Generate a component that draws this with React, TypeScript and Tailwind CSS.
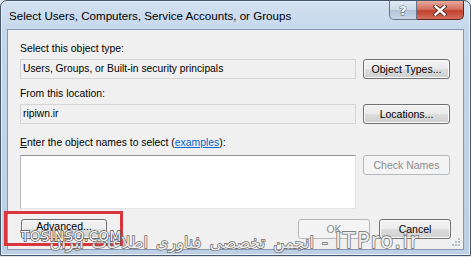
import React from 'react';

const ui = "[font-family:'Liberation_Sans',Arial,sans-serif]";

const btn =
  'h-[20px] rounded-[3px] border border-[#707070] bg-[linear-gradient(#f2f2f2_0%,#ebebeb_50%,#dddddd_51%,#cfcfcf_100%)] shadow-[inset_0_0_0_1px_#fbfbfb] text-[10.5px] leading-none text-black';

const btnOff =
  'h-[20px] rounded-[3px] border border-[#b5b9bc] bg-[#f4f4f4] text-[10.5px] leading-none text-[#8d8d8d]';

const Label: React.FC<{ children: React.ReactNode }> = ({ children }) => (
  <div className="h-[12px] text-[10.4px] leading-[12px] text-black">{children}</div>
);

const ReadBox: React.FC<{ value: string }> = ({ value }) => (
  <div className="flex h-[20px] items-center border border-[#d5d5d5] bg-[#f0f0f0] pl-[2px] text-[10.3px] text-black">
    {value}
  </div>
);

export default function App() {
  return (
    <div className={`h-[257px] w-[471px] overflow-hidden bg-[#dfe5ea] ${ui}`}>
      <div className="relative flex h-[256px] w-[471px] flex-col rounded-t-[7px] border border-[#47576b] bg-[linear-gradient(180deg,#d2e1f1_0%,#c4d6ea_14%,#bccfe5_100%)] px-[6px] pb-[5px] shadow-[inset_0_0_0_1px_#e7eff8]">
        {/* Title bar */}
        <div className="flex h-[28px] items-start">
          <span className="ml-[2px] mt-[8px] text-[11.6px] leading-[14px] text-black">
            Select Users, Computers, Service Accounts, or Groups
          </span>
          <div className="ml-auto flex">
            <div className="flex h-[19px] w-[28px] items-center justify-center rounded-bl-[5px] border border-t-0 border-[#65768b] bg-[linear-gradient(#e1eaf4_0%,#cdd9e7_50%,#b2c3d8_52%,#c9d7e7_100%)]">
              <span className="[font-family:'DejaVu_Sans',sans-serif] text-[13px] font-bold leading-none text-white [-webkit-text-stroke:1px_#4a5563] [paint-order:stroke_fill]">
                ?
              </span>
            </div>
            <div className="flex h-[19px] w-[47px] items-center justify-center rounded-br-[5px] border border-l-0 border-t-0 border-[#5b2a24] bg-[linear-gradient(#e9a99b_0%,#d4705f_45%,#c2402e_55%,#d3705a_100%)]">
              <svg width="14" height="11" viewBox="0 0 14 11">
                <path d="M2.5 1.5 L11.5 9.5 M11.5 1.5 L2.5 9.5" stroke="#4b2620" strokeWidth="4.2" strokeLinecap="square" />
                <path d="M2.5 1.5 L11.5 9.5 M11.5 1.5 L2.5 9.5" stroke="#ffffff" strokeWidth="2.4" strokeLinecap="square" />
              </svg>
            </div>
          </div>
        </div>

        {/* Client area */}
        <div className="relative flex flex-1 flex-col border border-[#8598b0] bg-[#f0f0f0] pl-[12px] pr-[12px] pt-[13px]">
          <div className="flex items-end gap-[7px]">
            <div className="w-[336px]">
              <Label>Select this object type:</Label>
              <div className="mt-[4px]">
                <ReadBox value="Users, Groups, or Built-in security principals" />
              </div>
            </div>
            <button className={`${btn} w-[87px]`}>Object Types...</button>
          </div>

          <div className="mt-[9px] flex items-end gap-[7px]">
            <div className="w-[336px]">
              <Label>From this location:</Label>
              <div className="mt-[4px]">
                <ReadBox value="ripiwn.ir" />
              </div>
            </div>
            <button className={`${btn} w-[87px]`}>Locations...</button>
          </div>

          <div className="mt-[13px] flex items-start gap-[7px]">
            <div className="w-[336px]">
              <Label>
                <span className="underline underline-offset-[1px]">E</span>nter the object names to select (
                <span className="text-[#0066cc] underline underline-offset-[1px]">examples</span>):
              </Label>
              <div className="mt-[6px] h-[54px] border border-[#e2e6ea] border-l-[#b8bcc2] border-t-[#8e9298] bg-white" />
            </div>
            <button className={`${btnOff} mt-[18px] w-[87px]`}>Check Names</button>
          </div>

          <div className="mt-[10px] flex items-start">
            <button className={`${btn} ml-[1px] w-[86px] pb-[6px]`}>Advanced...</button>
            <button className={`${btnOff} ml-auto w-[72px]`}>OK</button>
            <button className={`${btn} ml-[9px] w-[72px] border-[#3c3c3c]`}>Cancel</button>
          </div>

          {/* Resize grip */}
          <svg className="absolute bottom-[2px] right-[2px]" width="10" height="10" viewBox="0 0 10 10">
            {[
              [7, 1],
              [7, 4],
              [4, 4],
              [7, 7],
              [4, 7],
              [1, 7],
            ].map(([x, y], i) => (
              <rect key={i} x={x} y={y} width="2" height="2" fill="#b6bcc4" />
            ))}
          </svg>
        </div>

        {/* Red highlight annotation */}
        <div className="absolute left-[3px] top-[210px] h-[35px] w-[119px] border-[3px] border-[#d8353c]" />

        {/* Watermarks */}
        <div
          dir="rtl"
          className="absolute right-[50px] top-[230px] flex items-baseline gap-[7px] whitespace-nowrap [font-family:'DejaVu_Sans',sans-serif] text-[#ececec] [-webkit-text-stroke:1.4px_#6a6a6a] [paint-order:stroke_fill]"
        >
          <span className="text-[21px] leading-none tracking-[1.5px]" dir="ltr">ITPro.ir</span>
          <span className="text-[16px] leading-none [word-spacing:3px]">- انجمن تخصصی فناوری اطلاعات ایران</span>
        </div>
        <div className="absolute left-[20px] top-[229px] [font-family:'DejaVu_Sans',sans-serif] text-[13.5px] leading-none tracking-[0.4px] text-[#f4f4f4] [-webkit-text-stroke:1.3px_#4d4d4d] [paint-order:stroke_fill]">
          TOSINSO.COM
        </div>
      </div>
    </div>
  );
}
